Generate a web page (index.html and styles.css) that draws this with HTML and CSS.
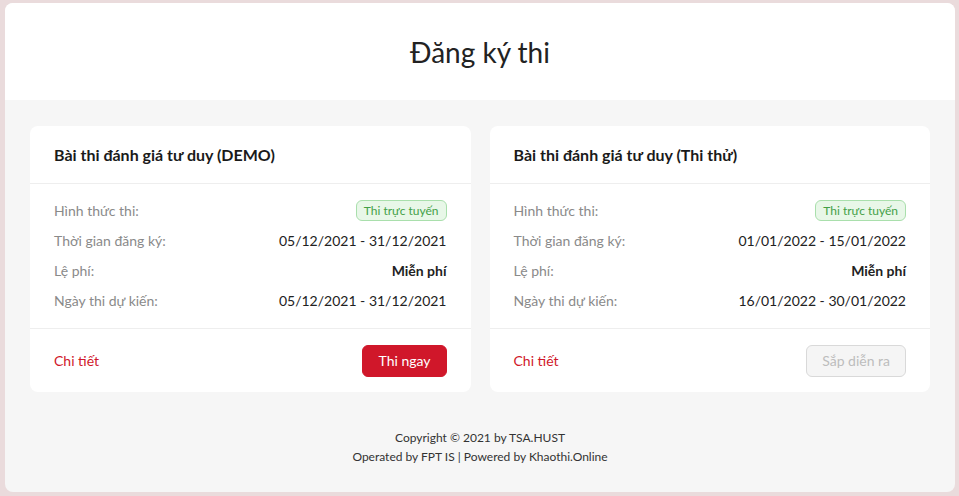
FILE: index.html
```html
<!DOCTYPE html>
<html lang="vi">

<head>
    <meta charset="UTF-8">
    <meta name="viewport" content="width=device-width, initial-scale=1.0">
    <title>Đăng ký thi</title>
    <link rel="stylesheet" href="styles.css">
</head>

<body>
    <div class="page">
        <header class="page-header">
            <h1>Đăng ký thi</h1>
        </header>

        <main class="page-body">
            <div class="exam-list">
                <!-- DEMO -->
                <div class="exam-card">
                    <div class="exam-card-head">Bài thi đánh giá tư duy (DEMO)</div>
                    <div class="exam-card-info">
                        <div class="info-row">
                            <span class="info-label">Hình thức thi:</span>
                            <span class="badge">Thi trực tuyến</span>
                        </div>
                        <div class="info-row">
                            <span class="info-label">Thời gian đăng ký:</span>
                            <span class="info-value">05/12/2021 - 31/12/2021</span>
                        </div>
                        <div class="info-row">
                            <span class="info-label">Lệ phí:</span>
                            <span class="info-value strong">Miễn phí</span>
                        </div>
                        <div class="info-row">
                            <span class="info-label">Ngày thi dự kiến:</span>
                            <span class="info-value">05/12/2021 - 31/12/2021</span>
                        </div>
                    </div>
                    <div class="exam-card-foot">
                        <a href="#" class="detail-link">Chi tiết</a>
                        <button class="btn btn-primary">Thi ngay</button>
                    </div>
                </div>

                <!-- Thi thử -->
                <div class="exam-card">
                    <div class="exam-card-head">Bài thi đánh giá tư duy (Thi thử)</div>
                    <div class="exam-card-info">
                        <div class="info-row">
                            <span class="info-label">Hình thức thi:</span>
                            <span class="badge">Thi trực tuyến</span>
                        </div>
                        <div class="info-row">
                            <span class="info-label">Thời gian đăng ký:</span>
                            <span class="info-value">01/01/2022 - 15/01/2022</span>
                        </div>
                        <div class="info-row">
                            <span class="info-label">Lệ phí:</span>
                            <span class="info-value strong">Miễn phí</span>
                        </div>
                        <div class="info-row">
                            <span class="info-label">Ngày thi dự kiến:</span>
                            <span class="info-value">16/01/2022 - 30/01/2022</span>
                        </div>
                    </div>
                    <div class="exam-card-foot">
                        <a href="#" class="detail-link">Chi tiết</a>
                        <button class="btn btn-disabled" disabled>Sắp diễn ra</button>
                    </div>
                </div>
            </div>

            <footer class="footer">
                <p>Copyright © 2021 by TSA.HUST</p>
                <p>Operated by FPT IS | Powered by Khaothi.Online</p>
            </footer>
        </main>
    </div>
</body>

</html>
```

FILE: styles.css
```css
body, h1, p {
    margin: 0;
    padding: 0;
}

body {
    font-family: 'Lato', 'Noto Sans', sans-serif;
    background-color: #eadbdc;
    color: #222;
    padding: 3px 4px 4px 5px;
}

.page {
    background-color: #f6f6f6;
    border-radius: 8px;
    overflow: hidden;
    height: 489px;
    display: flex;
    flex-direction: column;
}

.page-header {
    background-color: #fff;
    height: 97px;
    display: flex;
    align-items: center;
    justify-content: center;
}

.page-header h1 {
    font-size: 28px;
    font-weight: 400;
    color: #222;
}

.page-body {
    padding: 26px 25px 0 25px;
}

.exam-list {
    display: grid;
    grid-template-columns: 1fr 1fr;
    gap: 19px;
}

.exam-card {
    background-color: #fff;
    border-radius: 8px;
}

.exam-card-head {
    height: 57px;
    padding: 0 24px;
    display: flex;
    align-items: center;
    font-size: 16px;
    font-weight: 700;
    color: #1a1a1a;
    border-bottom: 1px solid #eee;
}

.exam-card-info {
    padding: 11px 24px 13px;
    border-bottom: 1px solid #eee;
}

.info-row {
    display: flex;
    justify-content: space-between;
    align-items: center;
    height: 30px;
    font-size: 14px;
}

.info-label {
    color: #8a8a8a;
}

.info-value {
    color: #222;
}

.info-value.strong {
    font-weight: 700;
}

.badge {
    font-size: 12px;
    color: #43a047;
    background-color: #e8f7e8;
    border: 1px solid #a9dfac;
    border-radius: 6px;
    padding: 2px 7px;
    line-height: 15px;
}

.exam-card-foot {
    height: 63px;
    padding: 0 24px;
    display: flex;
    justify-content: space-between;
    align-items: center;
}

.detail-link {
    color: #d0172a;
    text-decoration: none;
    font-size: 14px;
}

.btn {
    font-family: 'Lato', 'Noto Sans', sans-serif;
    font-size: 14px;
    height: 32px;
    padding: 0 15px;
    border-radius: 6px;
    cursor: pointer;
}

.btn-primary {
    background-color: #d0172a;
    color: #fff;
    border: 1px solid #d0172a;
}

.btn-disabled {
    background-color: #f5f5f5;
    color: #bdbdbd;
    border: 1px solid #d9d9d9;
    cursor: not-allowed;
}

.footer {
    text-align: center;
    font-size: 12px;
    color: #333;
    padding-top: 36px;
    line-height: 19px;
}
```
